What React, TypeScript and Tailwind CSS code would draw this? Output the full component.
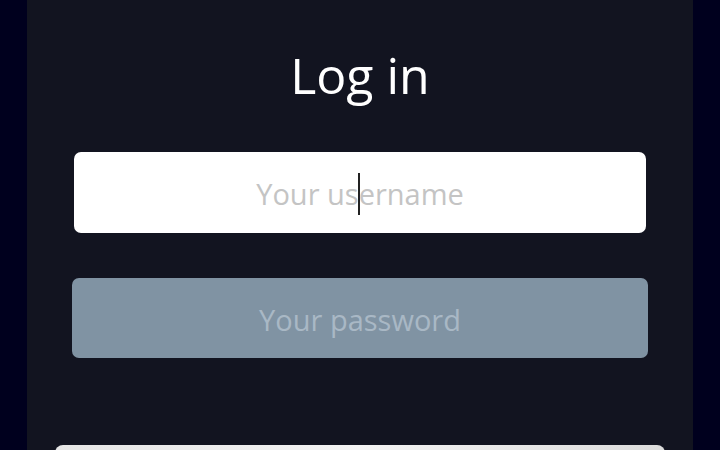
import React from "react";

export default function App() {
  return (
    <div
      className="w-[720px] h-[450px] overflow-hidden bg-[#00001e] flex justify-center"
      style={{ fontFamily: '"Open Sans", "Noto Sans", sans-serif' }}
    >
      <div className="w-[666px] h-full bg-[#121420] flex flex-col items-center">
        <h1 className="shrink-0 mt-[45px] text-[50px] leading-[60px] text-white font-normal">Log in</h1>
        <div className="shrink-0 mt-[47px] w-[572px] h-[81px] pt-[3px] bg-white rounded-[7px] flex items-center justify-center text-[29px] text-[#c4c4c4]">
          <span>Your us</span>
          <span className="inline-block w-[2px] h-[42px] bg-[#222] -mx-[1px]" />
          <span>ername</span>
        </div>
        <div className="shrink-0 mt-[45px] w-[576px] h-[80px] pt-[3px] bg-[#8093a3] rounded-[7px] flex items-center justify-center text-[29px] text-[#a9b8c5]">
          Your password
        </div>
        <div className="shrink-0 mt-[87px] w-[610px] h-[20px] rounded-t-[8px] bg-gradient-to-r from-[#e6e6e6] via-[#f4f4f4] to-[#dcdcdc]" />
      </div>
    </div>
  );
}
